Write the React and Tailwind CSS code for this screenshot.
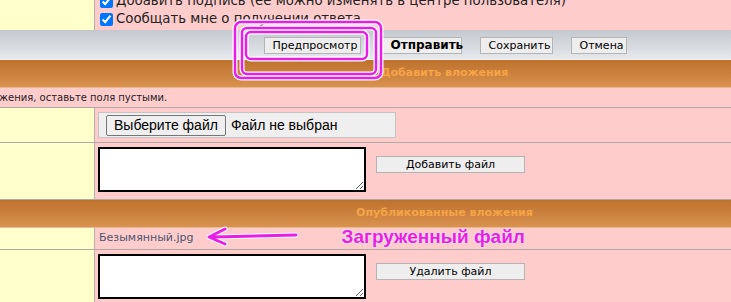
import React from 'react'

const btn = "h-[17px] px-2 bg-[#eeeeee] border border-[#b4b4b4] text-[11px] leading-[15px] text-black"

const OrangeBar = ({ children }) => (
  <div className="h-[28px] bg-gradient-to-b from-[#bd722c] to-[#d9924f] border-b border-[#e8b890] flex items-center justify-center pl-[158px]">
    <span className="text-[11px] font-bold text-[#f6a447]">{children}</span>
  </div>
)

const Row = ({ className, children }) => (
  <div className={"flex border-b border-[#b0a8a8] " + className}>
    <div className="w-[95px] shrink-0 bg-[#ffffcc] border-r border-[#b8b0a8]" />
    <div className="flex-1 bg-[#ffcccc]">{children}</div>
  </div>
)

export default function App() {
  return (
    <div className="relative w-[731px] h-[302px] overflow-hidden bg-[#ffcccc] font-['DejaVu_Sans',sans-serif] text-[#222]">
      {/* options */}
      <div className="flex h-[30px]">
        <div className="w-[95px] shrink-0 bg-[#ffffcc] border-r border-[#b8b0a8]" />
        <div className="flex-1 bg-[#ffcccc] pl-[5px] -mt-[8px] text-[13.3px] leading-[18px]">
          <label className="flex items-center gap-[3px]">
            <input type="checkbox" defaultChecked className="w-[13px] h-[13px] m-0" />
            Добавить подпись (ее можно изменять в центре пользователя)
          </label>
          <label className="flex items-center gap-[3px]">
            <input type="checkbox" defaultChecked className="w-[13px] h-[13px] m-0" />
            Сообщать мне о получении ответа
          </label>
        </div>
      </div>

      {/* buttons */}
      <div className="h-[30px] bg-gradient-to-b from-[#c3c9cf] to-[#e6e9ec] border-b border-[#f2f2f2] flex items-center justify-center pl-[159px] pt-[2px]">
        <button className={btn + " w-[97px]"}>Предпросмотр</button>
        <button className={btn + " w-[80px] ml-[21px] font-bold text-[12px]"}>Отправить</button>
        <button className={btn + " w-[73px] ml-[18px]"}>Сохранить</button>
        <button className={btn + " w-[56px] ml-[18px]"}>Отмена</button>
      </div>

      <OrangeBar>Добавить вложения</OrangeBar>

      <div className="h-[20px] border-b border-[#b0a8a8] text-[10px] leading-[20px] -ml-[1px]">
        жения, оставьте поля пустыми.
      </div>

      <Row className="h-[35px]">
        <div className="pl-[3px] pt-[4px]">
          <div className="w-[298px] h-[26px] bg-[#efefef] border border-[#c4c4c4] flex items-center pl-[7px] font-['Liberation_Sans',sans-serif] text-[14px] text-black">
            <span className="h-[21px] px-[7px] border border-[#767676] rounded-[2px] bg-[#efefef] leading-[19px]">Выберите файл</span>
            <span className="ml-[5px]">Файл не выбран</span>
          </div>
        </div>
      </Row>

      <Row className="h-[57px]">
        <div className="flex pl-[3px] pt-[4px]">
          <textarea readOnly className="w-[268px] h-[45px] bg-white border-2 border-black resize-y" />
          <div className="ml-[10px] mt-[4px]">
            <button className={btn + " w-[149px] h-[16px]"}>Добавить файл</button>
          </div>
        </div>
      </Row>

      <OrangeBar>Опубликованные вложения</OrangeBar>

      <Row className="h-[22px]">
        <div className="flex items-center h-full pl-[4px]">
          <span className="text-[11px] text-[#4a5670]">Безымянный.jpg</span>
          <span className="ml-[148px] font-['Liberation_Sans',sans-serif] font-bold text-[19px] text-[#e81ee8] [text-shadow:0_0_2px_#fff] -mt-[3px]">
            Загруженный файл
          </span>
        </div>
      </Row>

      <Row className="h-[60px] border-b-0">
        <div className="flex pl-[3px] pt-[4px]">
          <textarea readOnly className="w-[268px] h-[45px] bg-white border-2 border-black resize-y" />
          <div className="ml-[10px] mt-[4px]">
            <button className={btn + " w-[149px] h-[16px]"}>Удалить файл</button>
          </div>
        </div>
      </Row>

      {/* annotations */}
      <svg className="absolute left-0 top-0 pointer-events-none" width="731" height="302">
        <g fill="none" stroke="#fff" strokeWidth="5">
          <rect x="235" y="22" width="146" height="56" rx="6" />
          <rect x="242" y="28" width="134" height="46" rx="5" />
          <rect x="246" y="32" width="121" height="27" rx="5" />
          <path d="M296 235 L213 237 M225 229 L209 237 L225 244" strokeLinecap="round" strokeLinejoin="round" />
        </g>
        <g fill="none" stroke="#e81ee8" strokeWidth="2.5">
          <rect x="235" y="22" width="146" height="56" rx="6" />
          <rect x="242" y="28" width="134" height="46" rx="5" />
          <rect x="246" y="32" width="121" height="27" rx="5" />
          <path d="M296 235 L213 237 M225 229 L209 237 L225 244" strokeWidth="3" strokeLinecap="round" strokeLinejoin="round" />
        </g>
      </svg>
    </div>
  )
}
